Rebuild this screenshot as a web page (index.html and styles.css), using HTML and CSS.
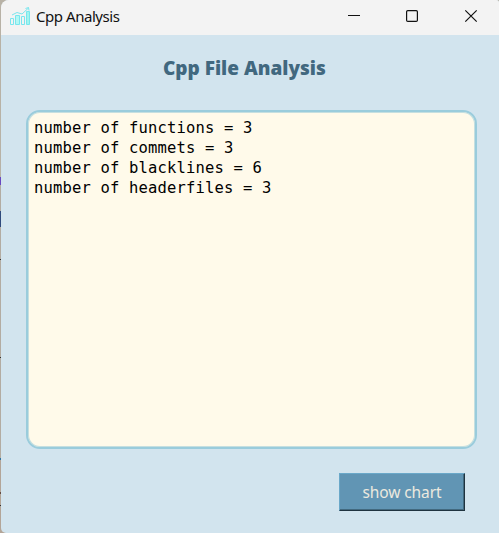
FILE: index.html
```html
<!DOCTYPE html>
<html lang="en">
<head>
<meta charset="utf-8">
<title>Cpp Analysis</title>
<link rel="stylesheet" href="styles.css">
</head>
<body>
<div class="window">
  <header class="titlebar">
    <svg class="app-icon" width="22" height="20" viewBox="0 0 22 20" fill="none" stroke="#79e6ee">
      <path d="M1.500 12.500h3v6h-3z"/>
      <path d="M6.500 9.500h4v9h-4z" fill="#b4f8f4"/>
      <path d="M12.500 10.500h3v8h-3z"/>
      <path d="M17.500 5.500h3v13h-3z" fill="#a2f5ee"/>
      <path d="M3 9L8 6.500L13 8L19.500 2M16.500 2.500l3-1 .5 3"/>
    </svg>
    <span class="caption">Cpp Analysis</span>
    <svg class="controls" width="174" height="35" viewBox="0 0 174 35" fill="none" stroke="#111">
      <path d="M23 15.500h12"/>
      <rect x="81.600" y="10.600" width="10.800" height="10.800" rx="1.200" stroke-width="1.200"/>
      <path d="M140.300 10.300l11.400 11.400M151.700 10.300l-11.400 11.400" stroke-width="1.200"/>
    </svg>
  </header>
  <main class="content">
    <h1 class="heading">Cpp File Analysis</h1>
    <pre class="output">number of functions = 3
number of commets = 3
number of blacklines = 6
number of headerfiles = 3</pre>
    <button class="chart-button" type="button">show chart</button>
  </main>
</div>
</body>
</html>
```
FILE: styles.css
```css
* {
  box-sizing: border-box;
}

body {
  margin: 0;
  height: 533px;
  padding-left: 1px;
  overflow: hidden;
  background: linear-gradient(#b8b2a6 0 177px, #6848c0 177px 185px, #b3aca2 185px 211px, #2f4a7c 211px 227px, #b3aca2 227px 259px, #333 259px 260px, #b3aca2 260px 357px, #333 357px 358px, #b3aca2 358px 458px, #3274a0 458px 460px, #b3a598 460px 492px, #654d42 492px 494px, #b3a598 494px 505px, #333 505px 506px, #b3a598 506px);
}

.window {
  display: flex;
  flex-direction: column;
  height: 533px;
  border-radius: 8px 3px 0 5px;
  overflow: hidden;
  background: #d2e4ee;
}

.titlebar {
  display: flex;
  flex: none;
  height: 35px;
  padding-left: 8px;
  background: #f3f3f3;
}

.app-icon {
  margin-top: 6px;
}

.caption {
  flex: 1;
  padding-left: 5px;
  font: 15px/33px "Noto Sans", sans-serif;
  letter-spacing: -0.45px;
  white-space: nowrap;
  color: #111;
}

.content {
  display: flex;
  flex: 1;
  flex-direction: column;
  padding: 18px 22px 0 25px;
}

.heading {
  margin: 0 0 27px 137px;
  font: 800 19px/30px "Open Sans", "Noto Sans", sans-serif;
  white-space: nowrap;
  color: #41687f;
}

.output {
  width: 451px;
  height: 339px;
  margin: 0;
  padding: 6px 6px;
  border: 2px solid #9accdc;
  border-radius: 14px;
  background: #fffaea;
  box-shadow: inset 0 0 0 1px #c5dfe0;
  color: #000;
  font: 15.500px/20px "DejaVu Sans Mono", monospace;
  letter-spacing: 0.17px;
}

.chart-button {
  align-self: flex-end;
  width: 126px;
  height: 38px;
  margin: 24px 12px 0 0;
  padding: 0;
  border: 1px solid #1f333f;
  border-top-color: #6aa8c9;
  border-left-color: #6aa8c9;
  background: #6195b4;
  box-shadow: inset -1px -1px #42697f;
  color: #ece9df;
  font: 15.500px/34px "Noto Sans", sans-serif;
  letter-spacing: -0.1px;
}
```
